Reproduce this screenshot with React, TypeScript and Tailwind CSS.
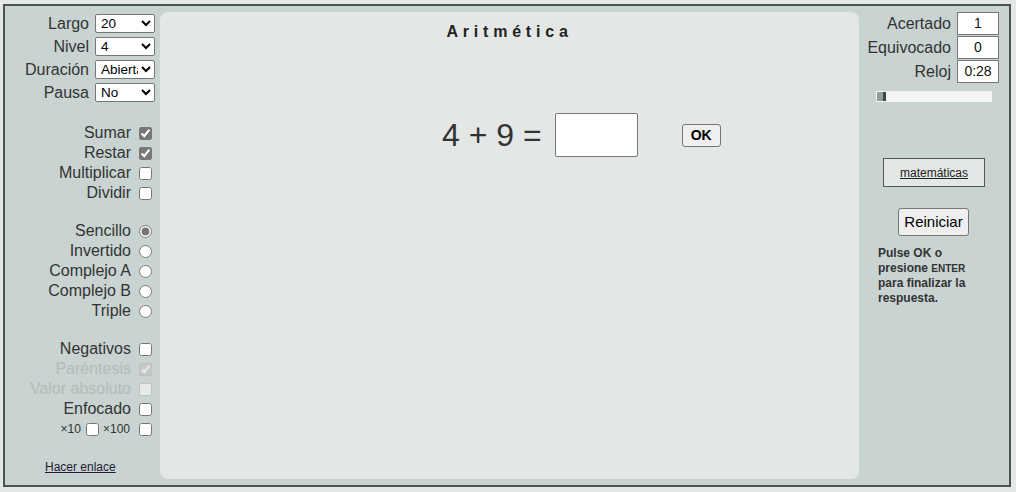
import React from "react";

const font = { fontFamily: '"Liberation Sans", Arial, sans-serif' };

function SelRow({ label, value, options }: { label: string; value: string; options: string[] }) {
  return (
    <div className="flex h-[19px] items-center justify-end gap-[6px]">
      <span className="text-[16px] leading-[19px] text-[#333]">{label}</span>
      <select
        defaultValue={value}
        className="h-[19px] w-[60px] rounded-[2px] border border-[#767676] bg-white pl-[1px] text-[13.5px] leading-[17px] text-black"
      >
        {options.map((o) => (
          <option key={o}>{o}</option>
        ))}
      </select>
    </div>
  );
}

function CbRow({
  label,
  checked,
  disabled,
  radio,
}: {
  label: string;
  checked?: boolean;
  disabled?: boolean;
  radio?: boolean;
}) {
  return (
    <div className="flex h-[20px] items-center justify-end gap-[8px] pr-[3px]">
      <span className={"text-[16px] leading-[20px] " + (disabled ? "text-[#b3bcba]" : "text-[#333]")}>{label}</span>
      <input
        type={radio ? "radio" : "checkbox"}
        name={radio ? "tipo" : undefined}
        defaultChecked={checked}
        disabled={disabled}
        className="m-0 h-[13px] w-[13px] accent-[#777777]"
      />
    </div>
  );
}

export default function App() {
  return (
    <div className="h-[492px] w-[1016px] bg-[#e3e8e6] pl-[3px] pt-[4px]" style={font}>
      <div className="flex h-[483px] w-[1008px] border-2 border-[#4a5552] bg-[#c9d3d1]">
        {/* Left column */}
        <div className="flex w-[155px] flex-col pr-[5px] pt-[8px]">
          <div className="flex flex-col gap-[4px]">
            <SelRow label="Largo" value="20" options={["10", "20", "30", "50"]} />
            <SelRow label="Nivel" value="4" options={["1", "2", "3", "4", "5"]} />
            <SelRow label="Duración" value="Abierta" options={["Abierta", "1 min", "2 min"]} />
            <SelRow label="Pausa" value="No" options={["No", "Sí"]} />
          </div>
          <div className="mt-[21px] flex flex-col">
            <CbRow label="Sumar" checked />
            <CbRow label="Restar" checked />
            <CbRow label="Multiplicar" />
            <CbRow label="Dividir" />
          </div>
          <div className="mt-[18px] flex flex-col">
            <CbRow label="Sencillo" radio checked />
            <CbRow label="Invertido" radio />
            <CbRow label="Complejo A" radio />
            <CbRow label="Complejo B" radio />
            <CbRow label="Triple" radio />
          </div>
          <div className="mt-[18px] flex flex-col">
            <CbRow label="Negativos" />
            <CbRow label="Paréntesis" checked disabled />
            <CbRow label="Valor absoluto" disabled />
            <CbRow label="Enfocado" />
            <div className="flex h-[20px] items-center justify-end pr-[3px]">
              <span className="text-[12px] text-[#333]">×10</span>
              <input type="checkbox" className="m-0 ml-[5px] h-[13px] w-[13px] accent-[#777777]" />
              <span className="ml-[4px] text-[12px] text-[#333]">×100</span>
              <input type="checkbox" className="m-0 ml-[9px] h-[13px] w-[13px] accent-[#777777]" />
            </div>
          </div>
          <a href="#" className="ml-[40px] mt-[21px] self-start text-[12px] leading-[14px] text-[#231a33] underline">
            Hacer enlace
          </a>
        </div>

        {/* Center panel */}
        <div className="my-[6px] flex w-[699px] flex-col rounded-[8px] bg-[#e3e8e6]">
          <div className="pt-[11px] text-center text-[16px] font-bold leading-[18px] tracking-[4.8px] text-[#222]">
            Aritmética
          </div>
          <div className="mt-[72px] flex items-center pl-[282px]">
            <span className="whitespace-pre text-[32px] leading-[36px] text-[#333]">4 + 9 =</span>
            <input
              type="text"
              className="ml-[13px] h-[44px] w-[83px] rounded-[2px] border border-[#767676] bg-white"
            />
            <button className="ml-[44px] h-[23px] w-[39px] rounded-[3px] border border-[#767676] bg-[#efefef] text-[14px] font-bold text-black">
              OK
            </button>
          </div>
        </div>

        {/* Right column */}
        <div className="flex w-[150px] flex-col pt-[6px]">
          <div className="flex flex-col gap-[1px] pr-[10px]">
            {[
              ["Acertado", "1"],
              ["Equivocado", "0"],
              ["Reloj", "0:28"],
            ].map(([l, v]) => (
              <div key={l} className="flex h-[23px] items-center justify-end gap-[6px]">
                <span className="text-[16px] leading-[20px] text-[#333]">{l}</span>
                <div className="flex h-[23px] w-[42px] items-center justify-center border border-[#767676] bg-white text-[14px] text-[#111]">
                  {v}
                </div>
              </div>
            ))}
          </div>
          <div className="ml-[17px] mt-[8px] flex h-[11px] w-[116px] items-center bg-[#f3f5f4] pl-[1px]">
            <div className="h-[9px] w-[6px] bg-[#8fa09c]" />
            <div className="h-[9px] w-[3px] bg-[#3b4a46]" />
          </div>
          <div className="ml-[24px] mt-[56px] flex h-[29px] w-[102px] items-center justify-center border border-[#555] bg-[#e3e8e6]">
            <a href="#" className="text-[12px] text-[#222] underline">
              matemáticas
            </a>
          </div>
          <button className="ml-[39px] mt-[21px] h-[28px] w-[71px] rounded-[3px] border border-[#767676] bg-[#efefef] text-[15px] text-black">
            Reiniciar
          </button>
          <div className="ml-[19px] mt-[10px] text-[12px] font-bold leading-[14.5px] text-[#333]">
            Pulse OK o
            <br />
            presione <span className="text-[10px]">ENTER</span>
            <br />
            para finalizar la
            <br />
            respuesta.
          </div>
        </div>
      </div>
    </div>
  );
}
